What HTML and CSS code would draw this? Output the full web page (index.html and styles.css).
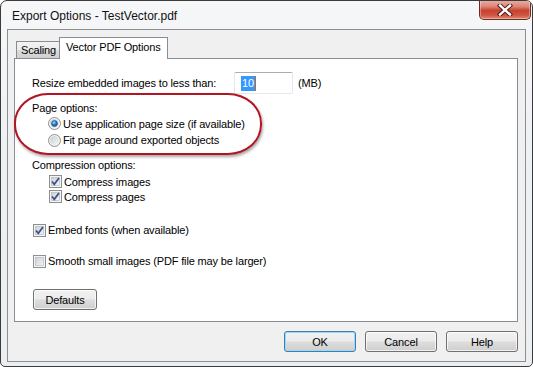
FILE: index.html
```html
<!DOCTYPE html>
<html lang="en">
<head>
  <meta charset="UTF-8">
  <title>Export Options - TestVector.pdf</title>
  <link rel="stylesheet" href="styles.css">
</head>
<body>
  <div class="window">
    <!-- Barra de titulo -->
    <div class="titlebar">
      <span class="title">Export Options - TestVector.pdf</span>
      <div class="close-btn">
        <svg width="20" height="12" viewBox="0 0 20 12">
          <path d="M5 1.5 L15 10.5 M15 1.5 L5 10.5" stroke="#4a1410" stroke-width="4.2" stroke-linecap="square" fill="none"/>
          <path d="M5 1.5 L15 10.5 M15 1.5 L5 10.5" stroke="#ffffff" stroke-width="2.4" stroke-linecap="square" fill="none"/>
        </svg>
      </div>
    </div>

    <!-- Area cliente -->
    <div class="client">
      <div class="tabs">
        <div class="tab">Scaling</div>
        <div class="tab active">Vector PDF Options</div>
      </div>

      <div class="panel">
        <div class="row resize-row">
          <span class="resize-label">Resize embedded images to less than:</span>
          <div class="textbox"><span class="sel">10</span><span class="caret"></span></div>
          <span class="unit">(MB)</span>
        </div>

        <div class="row group-label page-label">Page options:</div>
        <label class="row option indent radio-row1">
          <svg class="radio" width="13" height="13" viewBox="0 0 13 13">
            <defs>
              <linearGradient id="rg" x1="0" y1="0" x2="1" y2="1">
                <stop offset="0" stop-color="#c9ccd1"/>
                <stop offset="1" stop-color="#f7f7f7"/>
              </linearGradient>
              <radialGradient id="dot" cx="0.4" cy="0.35" r="0.7">
                <stop offset="0" stop-color="#a9e0ff"/>
                <stop offset="0.5" stop-color="#1f7fcf"/>
                <stop offset="1" stop-color="#0c4f8c"/>
              </radialGradient>
            </defs>
            <circle cx="6.5" cy="6.5" r="6" fill="#f4f4f4" stroke="#8e8f8f"/>
            <circle cx="6.5" cy="6.5" r="4.5" fill="url(#rg)"/>
            <circle cx="6.5" cy="6.5" r="3" fill="url(#dot)" stroke="#1b4f80" stroke-width="0.6"/>
          </svg>
          <span>Use application page size (if available)</span>
        </label>
        <label class="row option indent radio-row2">
          <svg class="radio" width="13" height="13" viewBox="0 0 13 13">
            <circle cx="6.5" cy="6.5" r="6" fill="#f4f4f4" stroke="#8e8f8f"/>
            <circle cx="6.5" cy="6.5" r="4.5" fill="url(#rg)"/>
          </svg>
          <span>Fit page around exported objects</span>
        </label>

        <div class="row group-label comp-label">Compression options:</div>
        <label class="row option indent cb-row1">
          <svg class="check" width="13" height="13" viewBox="0 0 13 13">
            <defs>
              <linearGradient id="cg" x1="0" y1="0" x2="1" y2="1">
                <stop offset="0" stop-color="#cbcfd5"/>
                <stop offset="1" stop-color="#f6f6f6"/>
              </linearGradient>
            </defs>
            <rect x="0.5" y="0.5" width="12" height="12" fill="#f4f4f4" stroke="#8e8f8f"/>
            <rect x="2.5" y="2.5" width="8" height="8" fill="url(#cg)" stroke="#b0b4bb" stroke-width="0.6"/>
            <path d="M3 6.5 L5.3 9.3 L10 3" stroke="#3b5387" stroke-width="1.8" fill="none"/>
          </svg>
          <span>Compress images</span>
        </label>
        <label class="row option indent cb-row2">
          <svg class="check" width="13" height="13" viewBox="0 0 13 13">
            <rect x="0.5" y="0.5" width="12" height="12" fill="#f4f4f4" stroke="#8e8f8f"/>
            <rect x="2.5" y="2.5" width="8" height="8" fill="url(#cg)" stroke="#b0b4bb" stroke-width="0.6"/>
            <path d="M3 6.5 L5.3 9.3 L10 3" stroke="#3b5387" stroke-width="1.8" fill="none"/>
          </svg>
          <span>Compress pages</span>
        </label>

        <label class="row option flush embed-row">
          <svg class="check" width="13" height="13" viewBox="0 0 13 13">
            <rect x="0.5" y="0.5" width="12" height="12" fill="#f4f4f4" stroke="#8e8f8f"/>
            <rect x="2.5" y="2.5" width="8" height="8" fill="url(#cg)" stroke="#b0b4bb" stroke-width="0.6"/>
            <path d="M3 6.5 L5.3 9.3 L10 3" stroke="#3b5387" stroke-width="1.8" fill="none"/>
          </svg>
          <span>Embed fonts (when available)</span>
        </label>
        <label class="row option flush smooth-row">
          <svg class="check" width="13" height="13" viewBox="0 0 13 13">
            <rect x="0.5" y="0.5" width="12" height="12" fill="#f4f4f4" stroke="#8e8f8f"/>
            <rect x="2.5" y="2.5" width="8" height="8" fill="url(#cg)" stroke="#b0b4bb" stroke-width="0.6"/>
          </svg>
          <span>Smooth small images (PDF file may be larger)</span>
        </label>

        <button class="btn defaults">Defaults</button>

        <!-- Marca roja de resaltado -->
        <div class="highlight"></div>
      </div>

      <div class="actions">
        <button class="btn focused">OK</button>
        <button class="btn">Cancel</button>
        <button class="btn">Help</button>
      </div>
    </div>
  </div>
</body>
</html>
```

FILE: styles.css
```css
/* === BASE === */
* {
  margin: 0;
  padding: 0;
  box-sizing: border-box;
}
body {
  width: 533px;
  height: 367px;
  background: #ffffff;
  font-family: "Liberation Sans", Arial, sans-serif;
  font-size: 11px;
  letter-spacing: -0.15px;
  color: #000;
  overflow: hidden;
}

/* === VENTANA === */
.window {
  width: 533px;
  height: 367px;
  border: 1px solid #3b3b3b;
  border-radius: 7px 7px 5px 5px;
  background: linear-gradient(180deg, #f6f7f9 0%, #eef1f4 40%, #eceff2 100%);
  display: flex;
  flex-direction: column;
  overflow: hidden;
}
.titlebar {
  height: 28px;
  display: flex;
  align-items: flex-start;
  flex-shrink: 0;
}
.title {
  font-size: 12px;
  letter-spacing: 0;
  padding: 8px 0 0 11px;
  color: #111;
}
.close-btn {
  margin: -1px 1px 0 auto;
  width: 52px;
  height: 20px;
  border: 1px solid #6b2a22;
  border-top: none;
  border-radius: 0 0 5px 5px;
  background: linear-gradient(180deg, #eab1a5 0%, #dc8475 35%, #c7412e 55%, #cf5443 80%, #e08a6f 100%);
  box-shadow: inset 0 0 0 1px rgba(255,255,255,0.35);
  display: flex;
  align-items: center;
  justify-content: center;
}

/* === AREA CLIENTE === */
.client {
  flex: 1;
  margin: 0 6px 4px 6px;
  background: #f0f0f0;
  border: 1px solid #8d8e8f;
  padding: 7px 7px 0 6px;
  display: flex;
  flex-direction: column;
}
.tabs {
  display: flex;
  align-items: flex-end;
  height: 21px;
  padding-left: 2px;
  position: relative;
  z-index: 1;
}
.tab {
  height: 17px;
  padding: 2px 3px 0 4px;
  border: 1px solid #898c95;
  border-bottom: none;
  background: linear-gradient(180deg, #f3f3f3 0%, #ebebeb 50%, #dcdcdc 51%, #cfcfcf 100%);
  white-space: nowrap;
}
.tab.active {
  height: 22px;
  margin-left: -1px;
  margin-bottom: -1px;
  padding: 3px 6px 0 6px;
  background: #ffffff;
}

/* === PANEL DE OPCIONES === */
.panel {
  position: relative;
  height: 264px;
  background: #ffffff;
  border: 1px solid #898c95;
  padding: 0 0 0 17px;
}
.row {
  display: flex;
  align-items: center;
  white-space: nowrap;
}
.resize-row {
  margin-top: 13px;
  height: 22px;
}
.resize-label {
  width: 202px;
}
.textbox {
  width: 59px;
  height: 22px;
  border: 1px solid #e3e9ef;
  border-top-color: #abadb3;
  border-radius: 2px;
  padding: 3px 0 0 6px;
  display: flex;
  align-items: flex-start;
}
.sel {
  background: #3399ff;
  color: #fff;
  line-height: 15px;
  padding: 0 1px;
}
.caret {
  width: 1px;
  height: 15px;
  background: #c26a1a;
}
.unit {
  margin-left: 5px;
}
.page-label {
  margin-top: 6px;
  height: 15px;
}
.radio-row1 {
  height: 17px;
}
.radio-row2 {
  height: 16px;
}
.comp-label {
  margin-top: 9px;
  height: 16px;
}
.cb-row1 {
  margin-top: 1px;
  height: 15px;
}
.cb-row2 {
  height: 15px;
}
.embed-row {
  margin-top: 18px;
  height: 16px;
}
.smooth-row {
  margin-top: 15px;
  height: 16px;
}
.option.indent {
  padding-left: 16px;
}
.option.flush {
  padding-left: 1px;
}
.radio {
  margin-right: 2px;
  flex-shrink: 0;
}
.check {
  margin-right: 2px;
  flex-shrink: 0;
}
.cb-row1 .check,
.cb-row2 .check {
  margin-left: 1px;
}

/* === BOTONES === */
.btn {
  font-family: "Liberation Sans", Arial, sans-serif;
  font-size: 11px;
  letter-spacing: -0.15px;
  color: #000;
  height: 21px;
  border: 1px solid #707070;
  border-radius: 3px;
  background: linear-gradient(180deg, #f2f2f2 0%, #ebebeb 48%, #dddddd 52%, #cfcfcf 100%);
  box-shadow: inset 0 0 0 1px rgba(255,255,255,0.7);
}
.defaults {
  display: block;
  margin: 20px 0 0 1px;
  width: 64px;
}
.actions {
  display: flex;
  justify-content: flex-end;
  gap: 9px;
  margin-top: 9px;
}
.actions .btn {
  width: 72px;
}
.btn.focused {
  border-color: #3c7fb1;
  box-shadow: inset 0 0 0 1px #9fd8f5;
}

/* === RESALTADO ROJO === */
.highlight {
  position: absolute;
  left: -1px;
  top: 34px;
  width: 248px;
  height: 62px;
  border: 2px solid #b11522;
  border-radius: 34px / 30px;
  box-shadow: 1px 2px 3px rgba(0,0,0,0.35);
  pointer-events: none;
}
```
